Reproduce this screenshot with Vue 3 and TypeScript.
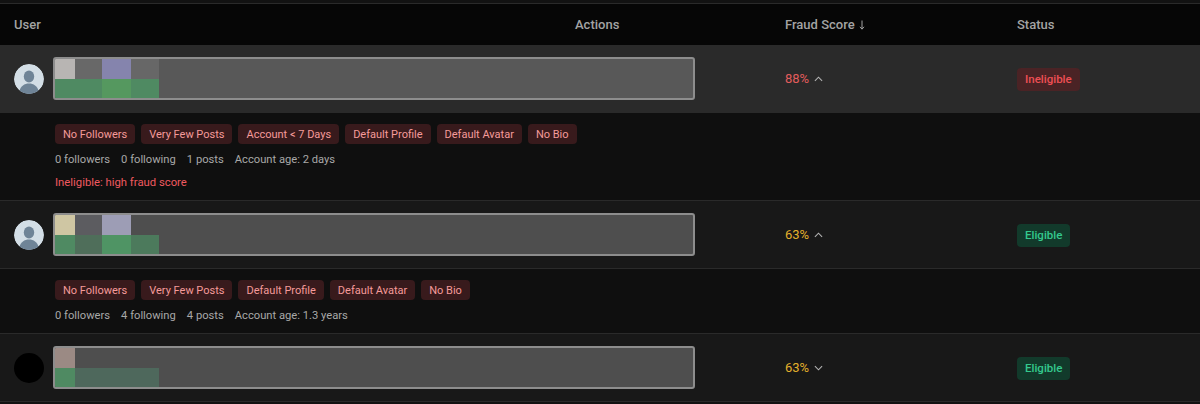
<script setup lang="ts">
interface Block {
  w: number
  c: string
}
interface Row {
  id: number
  bg: string
  avatar: 'default' | 'black'
  top: Block[]
  bottom: Block[]
  score: number
  tone: 'bad' | 'warn'
  open: boolean
  status: string
  flags: string[]
  followers: number
  following: number
  posts: number
  age: string
  note?: string
}

const rows: Row[] = [
  {
    id: 1,
    bg: 'row-hover',
    avatar: 'default',
    top: [
      { w: 20, c: '#b8b5b3' },
      { w: 27, c: '#686868' },
      { w: 29, c: '#8584ad' },
      { w: 28, c: '#676767' }
    ],
    bottom: [
      { w: 47, c: '#4f8a62' },
      { w: 29, c: '#55985f' },
      { w: 28, c: '#4f8a62' }
    ],
    score: 88,
    tone: 'bad',
    open: true,
    status: 'Ineligible',
    flags: ['No Followers', 'Very Few Posts', 'Account < 7 Days', 'Default Profile', 'Default Avatar', 'No Bio'],
    followers: 0,
    following: 0,
    posts: 1,
    age: '2 days',
    note: 'Ineligible: high fraud score'
  },
  {
    id: 2,
    bg: '',
    avatar: 'default',
    top: [
      { w: 20, c: '#cfc6a3' },
      { w: 27, c: '#5c5c60' },
      { w: 29, c: '#9d9db5' },
      { w: 28, c: '#4e4e4e' }
    ],
    bottom: [
      { w: 20, c: '#4f8a62' },
      { w: 27, c: '#4f6e5a' },
      { w: 29, c: '#4f9464' },
      { w: 28, c: '#4c7a5c' }
    ],
    score: 63,
    tone: 'warn',
    open: true,
    status: 'Eligible',
    flags: ['No Followers', 'Very Few Posts', 'Default Profile', 'Default Avatar', 'No Bio'],
    followers: 0,
    following: 4,
    posts: 4,
    age: '1.3 years'
  },
  {
    id: 3,
    bg: '',
    avatar: 'black',
    top: [{ w: 20, c: '#9b8a84' }],
    bottom: [
      { w: 20, c: '#4f8a62' },
      { w: 84, c: '#4e685c' }
    ],
    score: 63,
    tone: 'warn',
    open: false,
    status: 'Eligible',
    flags: [],
    followers: 0,
    following: 0,
    posts: 0,
    age: ''
  }
]
</script>

<template>
  <div class="panel">
    <div class="head">
      <span>User</span>
      <span>Actions</span>
      <span class="sorted">
        Fraud Score
        <svg viewBox="0 0 6 10" width="6" height="10" fill="none" stroke="#a3a3a3" stroke-width="1">
          <path d="M3 0.5v8.500M1 6.800l2 2.400 2-2.400" />
        </svg>
      </span>
      <span>Status</span>
    </div>

    <template v-for="row in rows" :key="row.id">
      <div class="row" :class="row.bg">
        <div class="user">
          <div class="avatar" :class="row.avatar">
            <svg v-if="row.avatar === 'default'" viewBox="0 0 30 30" width="30" height="30">
              <circle cx="15" cy="15" r="15" fill="#d3dee6" />
              <ellipse cx="15" cy="12.500" rx="5.200" ry="6" fill="#6f8497" />
              <path d="M5.500 27c1-5 5-7.500 9.500-7.500s8.500 2.500 9.500 7.500a15 15 0 0 1-19 0z" fill="#6f8497" />
            </svg>
          </div>
          <div class="redact" :class="{ dim: !row.bg }">
            <div class="strip">
              <i v-for="(b, n) in row.top" :key="n" :style="{ width: b.w + 'px', background: b.c }"></i>
            </div>
            <div class="strip">
              <i v-for="(b, n) in row.bottom" :key="n" :style="{ width: b.w + 'px', background: b.c }"></i>
            </div>
          </div>
        </div>
        <div class="score" :class="row.tone">
          {{ row.score }}%
          <svg viewBox="0 0 10 6" width="9" height="6" fill="none" stroke="#b4b4b4" stroke-width="1.200">
            <path :d="row.open ? 'M1 5l4-4 4 4' : 'M1 1l4 4 4-4'" />
          </svg>
        </div>
        <div class="status">
          <span class="badge" :class="row.status.toLowerCase()">{{ row.status }}</span>
        </div>
      </div>

      <div v-if="row.open" class="detail">
        <div class="flags">
          <span v-for="f in row.flags" :key="f" class="flag">{{ f }}</span>
        </div>
        <div class="stats">
          <span>{{ row.followers }} followers</span>
          <span>{{ row.following }} following</span>
          <span>{{ row.posts }} posts</span>
          <span>Account age: {{ row.age }}</span>
        </div>
        <div v-if="row.note" class="note">{{ row.note }}</div>
      </div>
    </template>
  </div>
</template>

<style>
html,
body {
  background: #0b0b0b;
}
</style>

<style scoped>
.panel {
  width: 1200px;
  height: 404px;
  overflow: hidden;
  box-sizing: border-box;
  padding-top: 3px;
  background: #121212;
  font-family: Roboto, "Noto Sans", sans-serif;
}

.head {
  display: grid;
  grid-template-columns: 561px 210px 232px 1fr;
  align-items: center;
  height: 42px;
  padding-left: 14px;
  background: #060606;
  border-top: 1px solid #2a2a2a;
  box-sizing: border-box;
  color: #a3a3a3;
  font-size: 13px;
  font-weight: 500;
}

.sorted {
  display: flex;
  align-items: center;
  gap: 4px;
}

.row {
  display: grid;
  grid-template-columns: 771px 232px 1fr;
  align-items: center;
  height: 68px;
  padding-left: 14px;
  background: #181818;
  box-sizing: border-box;
  border-bottom: 1px solid #2a2a2a;
}

.row-hover {
  background: #2a2a2a;
}

.user {
  display: flex;
  align-items: center;
  gap: 9px;
}

.avatar {
  width: 30px;
  height: 30px;
  border-radius: 50%;
  overflow: hidden;
  flex-shrink: 0;
}

.avatar.black {
  background: #000;
}

.redact {
  width: 642px;
  height: 43px;
  box-sizing: border-box;
  border: 2px solid #8d8d8d;
  border-radius: 3px;
  background: #585858;
  overflow: hidden;
  filter: blur(0.4px);
}

.redact.dim {
  background: #4e4e4e;
}

.strip {
  display: flex;
  height: 20px;
}

.strip i {
  display: block;
  height: 100%;
}

.score {
  display: flex;
  align-items: center;
  gap: 5px;
  font-size: 13px;
}

.score.bad {
  color: #e25c5c;
}

.score.warn {
  color: #e3b02c;
}

.status {
  display: flex;
  padding-top: 2px;
}

.badge {
  height: 23px;
  line-height: 23px;
  padding: 0 8px;
  border-radius: 4px;
  font-size: 11.5px;
  font-weight: 500;
}

.badge.ineligible {
  background: #4a2325;
  color: #ef4f54;
}

.badge.eligible {
  background: #123a2b;
  color: #34c98e;
}

.detail {
  padding: 11px 14px 9px 55px;
  background: #0f0f0f;
  border-bottom: 1px solid #2a2a2a;
}

.flags {
  display: flex;
  gap: 6px;
}

.flag {
  height: 20px;
  line-height: 21px;
  padding: 0 8px;
  border-radius: 4px;
  background: #381a1c;
  color: #f59a9a;
  font-size: 11px;
}

.stats {
  display: flex;
  gap: 11px;
  margin-top: 8px;
  color: #a8a8a8;
  font-size: 11.2px;
  line-height: 16px;
}

.note {
  margin-top: 7px;
  color: #f05a60;
  font-size: 11.3px;
  line-height: 16px;
}
</style>
